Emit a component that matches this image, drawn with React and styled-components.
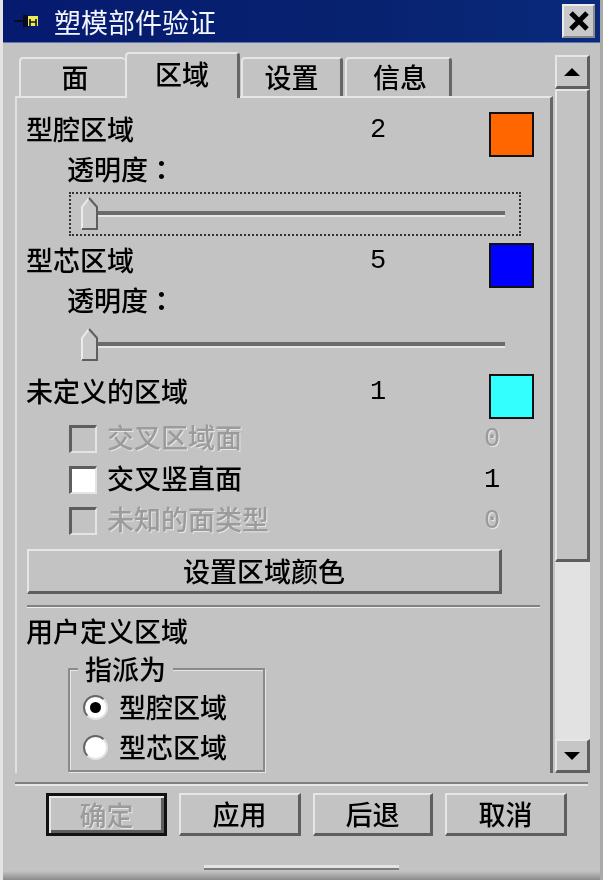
import React from 'react'
import styled, { createGlobalStyle } from 'styled-components'

const GlobalStyle = createGlobalStyle`
  html, body {
    margin: 0;
    padding: 0;
    background: #c3c3c3;
  }
  * {
    box-sizing: border-box;
  }
`

const Window = styled.div`
  width: 603px;
  height: 880px;
  background: #c3c3c3;
  color: #000;
  font-family: "Noto Sans CJK SC", "Liberation Sans", sans-serif;
  font-size: 27px;
  font-weight: 500;
  overflow: hidden;
  border-left: 3px solid #e4e4e4;
  border-right: 3px solid #a9a9a9;
  filter: blur(0.7px);
  position: relative;
`

const TitleBar = styled.div`
  height: 43px;
  margin: 0 -3px;
  background: linear-gradient(90deg, #061a70, #07226f 60%, #0a2a7c);
  border-bottom: 1px solid #5f74b0;
  display: flex;
  align-items: center;
  padding: 0 8px 0 14px;
`

const TitleText = styled.div`
  color: #f4f6ff;
  font-size: 27px;
  font-weight: 400;
  line-height: 43px;
  margin-left: 14px;
  flex: 1;
`

const CloseButton = styled.div`
  width: 33px;
  height: 34px;
  background: #c9c9c9;
  border-top: 2px solid #ececec;
  border-left: 2px solid #ececec;
  border-right: 2px solid #8a8a8a;
  border-bottom: 2px solid #8a8a8a;
  display: flex;
  align-items: center;
  justify-content: center;
`

const Body = styled.div`
  display: flex;
  padding: 9px 0 0 12px;
  height: 730px;
`

const LeftColumn = styled.div`
  width: 538px;
  display: flex;
  flex-direction: column;
`

const TabStrip = styled.div`
  height: 44px;
  padding-left: 4px;
  display: flex;
  align-items: flex-end;
`

const Tab = styled.div`
  width: ${p => p.$w}px;
  height: ${p => (p.$active ? 46 : 39)}px;
  line-height: ${p => (p.$active ? 39 : 36)}px;
  margin-right: ${p => p.$gap || 0}px;
  margin-bottom: ${p => (p.$active ? -2 : 0)}px;
  padding-left: ${p => p.$pad || 0}px;
  text-align: center;
  background: #c3c3c3;
  border-top: 2px solid #e6e6e6;
  border-left: 2px solid #e6e6e6;
  border-right: ${p => (p.$flat ? '0' : '3px solid #666')};
  border-radius: 4px 4px 0 0;
  position: relative;
  z-index: ${p => (p.$active ? 2 : 1)};
`

const Panel = styled.div`
  height: 677px;
  border-top: 2px solid #e6e6e6;
  border-left: 2px solid #e0e0e0;
  border-right: 3px solid #666;
  padding: 14px 0 0 10px;
`

const Head = styled.div`
  height: 40px;
  margin-left: -1px;
  display: grid;
  grid-template-columns: 344px 119px 44px;
  line-height: 34px;
`

const Count = styled.span`
  font-family: "Liberation Mono", monospace;
  font-size: 27px;
  font-weight: 400;
  line-height: ${p => p.$lh || 36}px;
  color: ${p => (p.$disabled ? '#9b9b9b' : '#000')};
  text-shadow: ${p => (p.$disabled ? '1px 1px 0 #e6e6e6' : 'none')};
`

const Swatch = styled.div`
  width: 45px;
  height: 45px;
  background: ${p => p.$color};
  border: 2px solid #111;
`

const OpacityLabel = styled.div`
  height: 34px;
  line-height: 34px;
  padding-left: 40px;
`

const Colon = styled.span`
  font-family: "Noto Sans CJK TC", sans-serif;
  font-weight: 700;
`

const SliderFrame = styled.div`
  width: 452px;
  height: 44px;
  margin: 6px 0 7px 42px;
  padding: 0 14px 0 21px;
  display: flex;
  align-items: center;
  position: relative;
  border: 2px dotted ${p => (p.$focused ? '#333' : 'transparent')};
`

const SliderTrack = styled.div`
  flex: 1;
  height: 6px;
  background: #6b6b6b;
  border-bottom: 2px solid #e6e6e6;
`

const SliderThumb = styled.svg`
  position: absolute;
  left: 10px;
  top: 3px;
`

const CheckRows = styled.div`
  margin-top: 4px;
`

const CheckRow = styled.div`
  height: 41px;
  margin-left: 42px;
  display: grid;
  grid-template-columns: 28px 367px auto;
  column-gap: 10px;
  align-items: center;
  line-height: 34px;
`

const CheckBox = styled.div`
  width: 28px;
  height: 28px;
  background: ${p => (p.$disabled ? '#c3c3c3' : '#fff')};
  border-top: 3px solid #5e5e5e;
  border-left: 3px solid #5e5e5e;
  border-right: 2px solid #e4e4e4;
  border-bottom: 2px solid #e4e4e4;
`

const CheckLabel = styled.span`
  margin-top: -3px;
  color: ${p => (p.$disabled ? '#9b9b9b' : '#000')};
  text-shadow: ${p => (p.$disabled ? '1px 1px 0 #e6e6e6' : 'none')};
`

const PushButton = styled.div`
  width: ${p => p.$w}px;
  height: ${p => p.$h}px;
  line-height: ${p => p.$h - 6}px;
  text-align: center;
  background: #c3c3c3;
  border-top: 2px solid #e6e6e6;
  border-left: 2px solid #e6e6e6;
  border-right: 3px solid #5e5e5e;
  border-bottom: 3px solid #5e5e5e;
`

const DefaultButton = styled(PushButton)`
  border: 3px solid #111;
  box-shadow: inset 2px 2px 0 #e6e6e6, inset -3px -3px 0 #5e5e5e;
  color: #9b9b9b;
  text-shadow: 1px 1px 0 #e6e6e6;
`

const WideButton = styled(PushButton)`
  margin-top: 8px;
`

const Divider = styled.div`
  width: ${p => p.$w}px;
  height: 3px;
  background: #808080;
  border-bottom: 1px solid #ececec;
  margin-top: ${p => p.$top}px;
`

const SectionTitle = styled.div`
  height: 34px;
  line-height: 34px;
  margin: 6px 0 0 -1px;
`

const GroupBox = styled.div`
  width: 197px;
  height: 104px;
  margin: 20px 0 0 41px;
  padding: 17px 0 0 13px;
  border: 2px solid #8a8a8a;
  box-shadow: 1px 1px 0 #e6e6e6, inset 1px 1px 0 #e6e6e6;
  position: relative;
`

const Legend = styled.div`
  position: absolute;
  left: 8px;
  top: -18px;
  line-height: 34px;
  padding: 0 7px;
  background: #c3c3c3;
`

const RadioRow = styled.div`
  height: 40px;
  display: flex;
  align-items: center;
  gap: 11px;
  line-height: 34px;
`

const Radio = styled.div`
  width: 25px;
  height: 25px;
  border-radius: 50%;
  background: #fff;
  border: 2px solid;
  border-color: #666 #e4e4e4 #e4e4e4 #666;
  display: flex;
  align-items: center;
  justify-content: center;
`

const RadioDot = styled.div`
  width: 11px;
  height: 11px;
  border-radius: 50%;
  background: #000;
`

const ScrollColumn = styled.div`
  width: 35px;
  margin: 3px 0 0 2px;
  height: 718px;
  display: flex;
  flex-direction: column;
`

const ScrollButton = styled.div`
  height: 34px;
  background: #c6c6c6;
  border-top: 2px solid #e6e6e6;
  border-left: 2px solid #e6e6e6;
  border-right: 3px solid #5e5e5e;
  border-bottom: 3px solid #5e5e5e;
  display: flex;
  align-items: center;
  justify-content: center;
`

const ScrollThumb = styled.div`
  height: 473px;
  background: #c3c3c3;
  border-top: 2px solid #e6e6e6;
  border-left: 2px solid #e6e6e6;
  border-right: 3px solid #5e5e5e;
  border-bottom: 3px solid #5e5e5e;
`

const ScrollTrack = styled.div`
  flex: 1;
  background: #e2e2e2;
`

const FooterRule = styled.div`
  height: 4px;
  margin: 9px 0 0 12px;
  width: 573px;
  background: #808080;
  border-bottom: 2px solid #e6e6e6;
`

const Footer = styled.div`
  display: flex;
  gap: 12px;
  padding: 7px 0 0 43px;
`

const Gripper = styled.div`
  width: 195px;
  height: 5px;
  margin: 29px 0 0 201px;
  background: #e4e4e4;
  border-bottom: 2px solid #7c7c7c;
`

const BottomEdge = styled.div`
  position: absolute;
  left: -3px;
  right: -3px;
  bottom: 0;
  height: 9px;
  background: linear-gradient(180deg, #c3c3c3, #8b8b8b);
  z-index: -1;
`

const Arrow = ({ up }) => (
  <svg width="18" height="10" viewBox="0 0 18 10">
    <path d={up ? 'M9 1 L17 9 L1 9 Z' : 'M1 1 L17 1 L9 9 Z'} fill="#000" />
  </svg>
)

const Thumb = () => (
  <SliderThumb width="18" height="34" viewBox="0 0 18 34">
    <path d="M1 10 L8 1 L16 10 L16 32 L1 32 Z" fill="#c9c9c9" />
    <path d="M1 32 L1 10 L8 1" fill="none" stroke="#ececec" strokeWidth="2" />
    <path d="M8 1 L16 10 L16 32 L1 32" fill="none" stroke="#5e5e5e" strokeWidth="2" />
  </SliderThumb>
)

const Region = ({ name, count, color, focused }) => (
  <>
    <Head>
      <span>{name}</span>
      <Count>{count}</Count>
      <Swatch $color={color} />
    </Head>
    <OpacityLabel>透明度<Colon>：</Colon></OpacityLabel>
    <SliderFrame $focused={focused}>
      <SliderTrack />
      <Thumb />
    </SliderFrame>
  </>
)

const checks = [
  { label: '交叉区域面', value: 0, disabled: true },
  { label: '交叉竖直面', value: 1, disabled: false },
  { label: '未知的面类型', value: 0, disabled: true },
]

const App = () => {
  return (
    <Window>
      <GlobalStyle />
      <TitleBar>
        <svg width="26" height="16" viewBox="0 0 26 16">
          <path d="M0 8 H10" stroke="#0b0b20" strokeWidth="2" />
          <rect x="9" y="2" width="5" height="12" fill="#0b0b20" />
          <path d="M14 3 H24 V13 H14 Z" fill="#ecec50" />
          <path d="M16 6 V13 M22 6 V13 M16 9 H22" stroke="#14142c" strokeWidth="1.6" />
        </svg>
        <TitleText>塑模部件验证</TitleText>
        <CloseButton>
          <svg width="22" height="22" viewBox="0 0 22 22">
            <path d="M3 3 L19 19 M19 3 L3 19" stroke="#000" strokeWidth="5" />
          </svg>
        </CloseButton>
      </TitleBar>

      <Body>
        <LeftColumn>
          <TabStrip>
            <Tab $w={106} $flat $pad={4}>面</Tab>
            <Tab $w={115} $active $gap={1}>区域</Tab>
            <Tab $w={102} $gap={2}>设置</Tab>
            <Tab $w={107} $pad={4}>信息</Tab>
          </TabStrip>
          <Panel>
            <Region name="型腔区域" count={2} color="#ff6600" focused />
            <Region name="型芯区域" count={5} color="#0000ff" />
            <Head>
              <span>未定义的区域</span>
              <Count>1</Count>
              <Swatch $color="#33ffff" />
            </Head>
            <CheckRows>
              {checks.map(c => (
                <CheckRow key={c.label}>
                  <CheckBox $disabled={c.disabled} />
                  <CheckLabel $disabled={c.disabled}>{c.label}</CheckLabel>
                  <Count $disabled={c.disabled} $lh={38}>{c.value}</Count>
                </CheckRow>
              ))}
            </CheckRows>
            <WideButton $w={475} $h={45}>设置区域颜色</WideButton>
            <Divider $w={513} $top={11} />
            <SectionTitle>用户定义区域</SectionTitle>
            <GroupBox>
              <Legend>指派为</Legend>
              <RadioRow>
                <Radio><RadioDot /></Radio>
                型腔区域
              </RadioRow>
              <RadioRow>
                <Radio />
                型芯区域
              </RadioRow>
            </GroupBox>
          </Panel>
        </LeftColumn>
        <ScrollColumn>
          <ScrollButton><Arrow up /></ScrollButton>
          <ScrollThumb />
          <ScrollTrack />
          <ScrollButton><Arrow /></ScrollButton>
        </ScrollColumn>
      </Body>

      <FooterRule />
      <Footer>
        <DefaultButton $w={121} $h={43}>确定</DefaultButton>
        <PushButton $w={122} $h={43}>应用</PushButton>
        <PushButton $w={120} $h={43}>后退</PushButton>
        <PushButton $w={122} $h={43}>取消</PushButton>
      </Footer>
      <Gripper />
      <BottomEdge />
    </Window>
  )
}

export default App
